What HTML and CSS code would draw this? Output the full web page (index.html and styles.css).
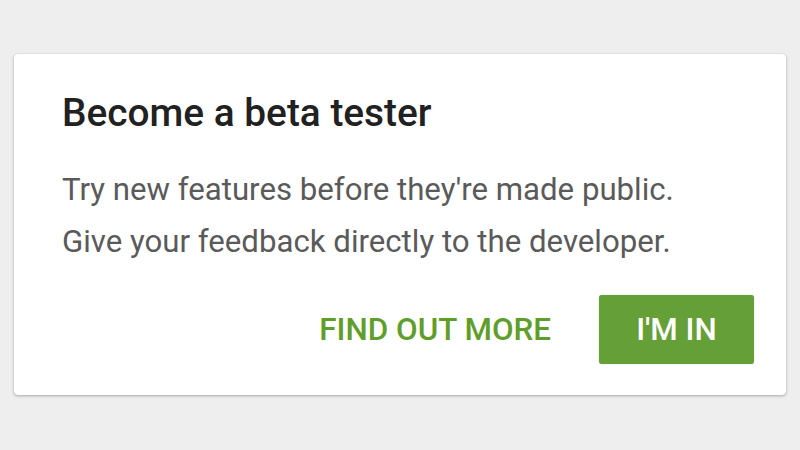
FILE: index.html
```html
<!DOCTYPE html>
<html>
<head>
<meta charset="utf-8">
<link rel="stylesheet" href="styles.css">
</head>
<body>
<div class="card">
  <h1 class="title">Become a beta tester</h1>
  <p class="text">Try new features before they're made public.</p>
  <p class="text">Give your feedback directly to the developer.</p>
  <div class="actions">
    <button class="btn btn-flat">FIND OUT MORE</button>
    <button class="btn btn-raised">I'M IN</button>
  </div>
</div>
</body>
</html>
```
FILE: styles.css
```css
html, body {
  margin: 0;
  padding: 0;
  background: #eeeeee;
  width: 800px;
  height: 450px;
  overflow: hidden;
}
body {
  padding: 54px 14px 0 14px;
  box-sizing: border-box;
  font-family: Roboto, "Noto Sans", sans-serif;
}
.card {
  background: #ffffff;
  border-radius: 4px;
  box-shadow: 0 1px 3px rgba(0,0,0,0.3), 0 0 1px rgba(0,0,0,0.15);
  padding: 36px 32px 0 48px;
  height: 341px;
  box-sizing: border-box;
}
.title {
  margin: 0;
  font-size: 38.8px;
  font-weight: 500;
  color: #212121;
  line-height: 46px;
}
.text {
  margin: 0;
  font-size: 31.2px;
  line-height: 52px;
  color: #5a5a5a;
}
.title + .text { margin-top: 28px; }
.actions {
  display: flex;
  justify-content: flex-end;
  align-items: center;
  gap: 48px;
  margin-top: 27px;
}
.btn {
  font-family: Roboto, "Noto Sans", sans-serif;
  font-size: 31.4px;
  font-weight: 500;
  border: none;
  padding: 0;
  cursor: pointer;
}
.btn-flat {
  background: transparent;
  color: #5f9e2b;
}
.btn-raised {
  background: #659f37;
  color: #ffffff;
  width: 155px;
  height: 69px;
  border-radius: 3px;
  box-shadow: 0 0 1px rgba(60,110,20,0.6);
}
```
